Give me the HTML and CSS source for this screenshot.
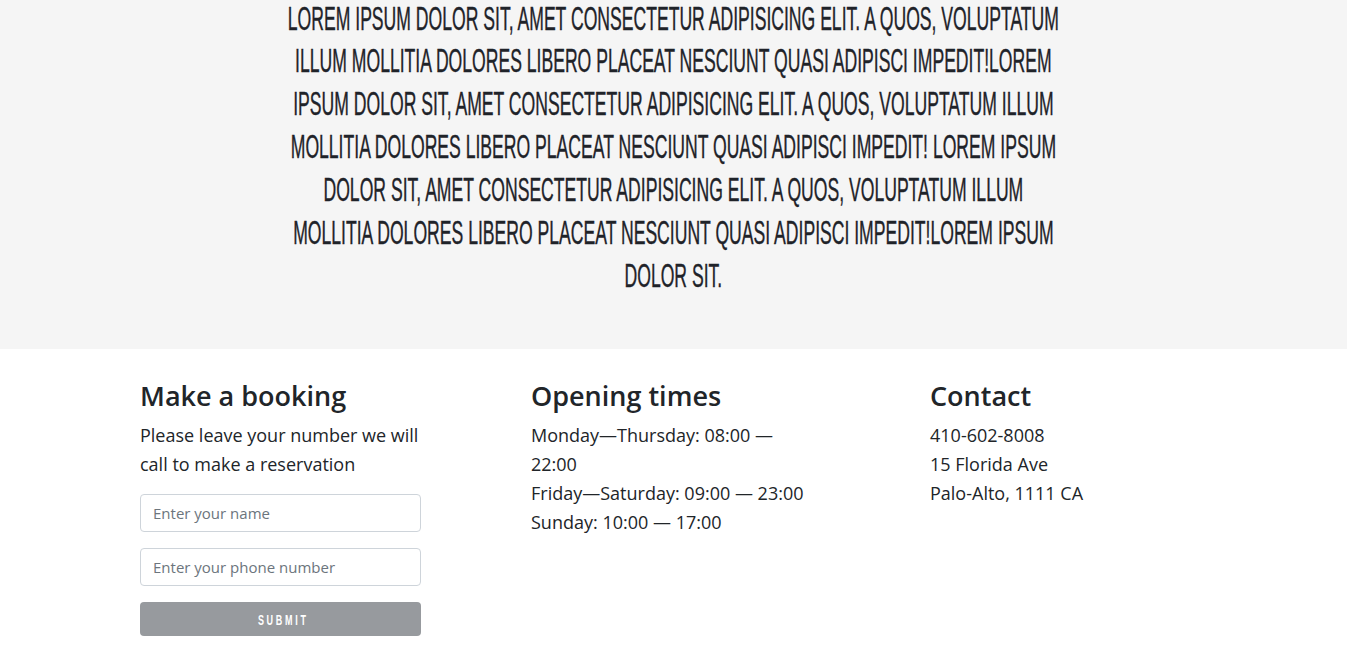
FILE: index.html
```html
<!DOCTYPE html>
<html lang="en">
<head>
<meta charset="utf-8">
<title>Restaurant</title>
<link rel="stylesheet" href="styles.css">
</head>
<body>
<section class="hero">
  <div class="hero-text">
    <span class="line">Lorem ipsum dolor sit, amet consectetur adipisicing elit. A quos, voluptatum</span>
    <span class="line">illum mollitia dolores libero placeat nesciunt quasi adipisci impedit!Lorem</span>
    <span class="line">ipsum dolor sit, amet consectetur adipisicing elit. A quos, voluptatum illum</span>
    <span class="line">mollitia dolores libero placeat nesciunt quasi adipisci impedit! Lorem ipsum</span>
    <span class="line">dolor sit, amet consectetur adipisicing elit. A quos, voluptatum illum</span>
    <span class="line">mollitia dolores libero placeat nesciunt quasi adipisci impedit!Lorem ipsum</span>
    <span class="line">dolor sit.</span>
  </div>
</section>
<footer class="info">
  <div class="col col-booking">
    <h3 class="title">Make a booking</h3>
    <p class="text">Please leave your number we will call to make a reservation</p>
    <form class="form">
      <input class="field" type="text" placeholder="Enter your name">
      <input class="field" type="text" placeholder="Enter your phone number">
      <button class="submit" type="button" disabled><span class="submit-label">Submit</span></button>
    </form>
  </div>
  <div class="col col-times">
    <h3 class="title">Opening times</h3>
    <p class="text">Monday—Thursday: 08:00 — 22:00<br>Friday—Saturday: 09:00 — 23:00<br>Sunday: 10:00 — 17:00</p>
  </div>
  <div class="col col-contact">
    <h3 class="title">Contact</h3>
    <p class="text">410-602-8008<br>15 Florida Ave<br>Palo-Alto, 1111 CA</p>
  </div>
</footer>
</body>
</html>
```
FILE: styles.css
```css
* { box-sizing: border-box; }
html, body { margin: 0; padding: 0; }
body {
  font-family: "Open Sans", "Noto Sans", sans-serif;
  color: #212529;
  background: #fff;
  overflow: hidden;
}
.hero {
  background: #f5f5f5;
  height: 349px;
  overflow: hidden;
  display: flex;
  justify-content: center;
}
.hero-text {
  flex: 0 0 auto;
  text-align: center;
  text-transform: uppercase;
  font-family: "Liberation Sans", Arial, sans-serif;
  font-weight: 400;
  font-size: 33px;
  line-height: 43px;
  color: #1f2329;
  transform: scaleX(0.533);
  transform-origin: center top;
  -webkit-text-stroke: 0.4px #1f2329;
}
.line { display: block; white-space: nowrap; }
.line:first-child { line-height: 37px; margin-bottom: 2px; }

.info {
  display: flex;
  padding: 30px 0 0 140px;
}
.col-booking { width: 391px; }
.col-times { width: 399px; }
.col > * { max-width: 281px; }
.title {
  margin: 0 0 8px;
  font-size: 27px;
  font-weight: 600;
  line-height: 34px;
  color: #212529;
}
.text {
  margin: 0;
  font-size: 18px;
  line-height: 29px;
}
.form {
  display: flex;
  flex-direction: column;
  gap: 16px;
  margin-top: 15px;
  width: 281px;
}
.field {
  height: 38px;
  border: 1px solid #ced4da;
  border-radius: 4px;
  padding: 0 12px;
  font-family: inherit;
  font-size: 15px;
  color: #495057;
  background: #fff;
}
.field::placeholder { color: #6c757d; }
.submit {
  height: 34px;
  border: none;
  border-radius: 4px;
  background: #979a9e;
  color: #fff;
  padding: 0;
  text-align: center;
}
.submit-label {
  display: inline-block;
  text-transform: uppercase;
  font-family: "Liberation Sans", Arial, sans-serif;
  font-weight: 700;
  font-size: 15px;
  letter-spacing: 4.5px;
  margin-right: -4.5px;
  transform: scaleX(0.6);
  transform-origin: center;
}
```
